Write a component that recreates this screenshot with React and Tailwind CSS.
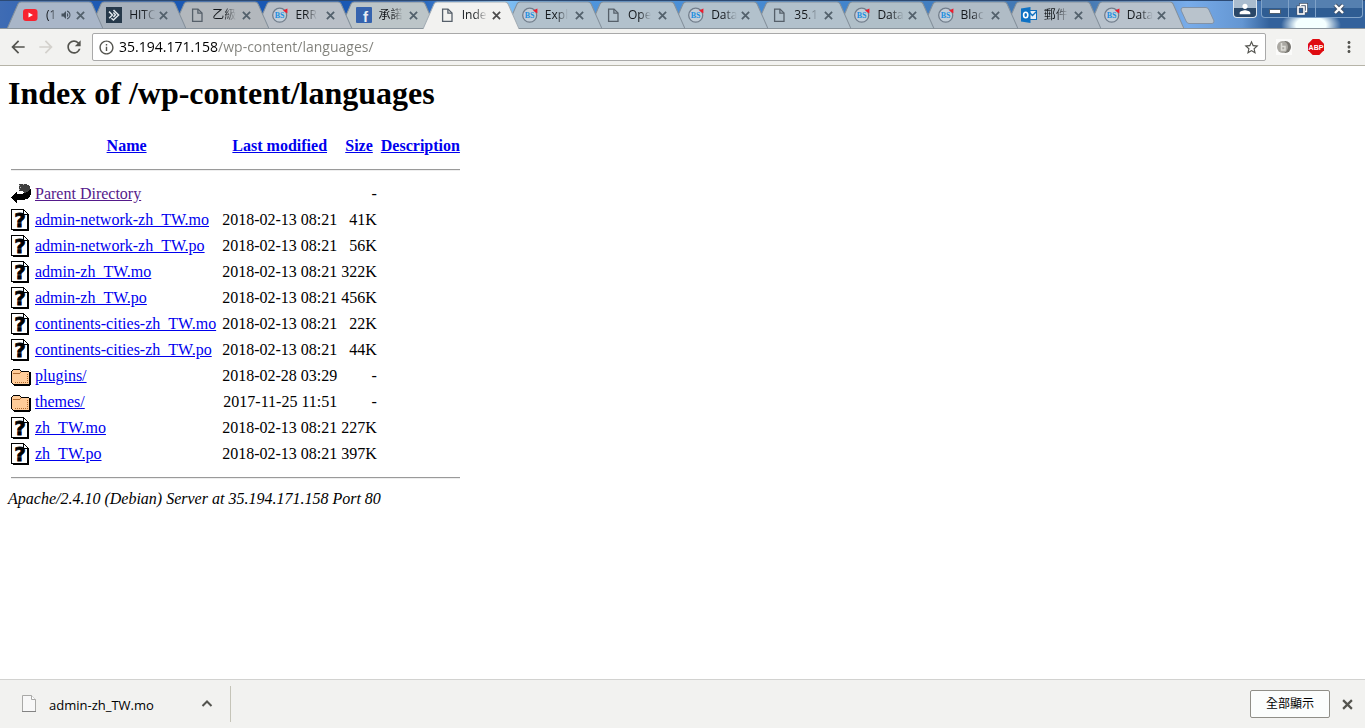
import {
    MdArrowBack,
    MdArrowForward,
    MdInfoOutline,
    MdMoreVert,
    MdPerson,
    MdRefresh,
    MdStarBorder,
    MdVolumeUp,
} from "react-icons/md";

const tabs = [
    { title: "(1", icon: "youtube", fill: "#a9b6c8", sound: true },
    { title: "HITC", icon: "hitcon", fill: "#a7b1bc" },
    { title: "乙級", icon: "page", fill: "#b3b8bd" },
    { title: "ERR", icon: "bs", fill: "#b9bfc7" },
    { title: "承諾", icon: "facebook", fill: "#bcc5c8" },
    { title: "Inde", icon: "page", fill: "#f2f2f0", active: true },
    { title: "Expl", icon: "bs", fill: "#b2c1cc" },
    { title: "Ope", icon: "page", fill: "#b2c1cc" },
    { title: "Data", icon: "bs", fill: "#b2c1cc" },
    { title: "35.1", icon: "page", fill: "#b2c1cc" },
    { title: "Data", icon: "bs", fill: "#b0bfc8" },
    { title: "Blac", icon: "bs", fill: "#b0bcc6" },
    { title: "郵件", icon: "outlook", fill: "#b0bac4" },
    { title: "Data", icon: "bs", fill: "#b8c2cc" },
];

const files = [
    { name: "Parent Directory", icon: "back", date: "", size: "-" },
    { name: "admin-network-zh_TW.mo", icon: "unknown", date: "2018-02-13 08:21", size: "41K" },
    { name: "admin-network-zh_TW.po", icon: "unknown", date: "2018-02-13 08:21", size: "56K" },
    { name: "admin-zh_TW.mo", icon: "unknown", date: "2018-02-13 08:21", size: "322K" },
    { name: "admin-zh_TW.po", icon: "unknown", date: "2018-02-13 08:21", size: "456K" },
    { name: "continents-cities-zh_TW.mo", icon: "unknown", date: "2018-02-13 08:21", size: "22K" },
    { name: "continents-cities-zh_TW.po", icon: "unknown", date: "2018-02-13 08:21", size: "44K" },
    { name: "plugins/", icon: "folder", date: "2018-02-28 03:29", size: "-" },
    { name: "themes/", icon: "folder", date: "2017-11-25 11:51", size: "-" },
    { name: "zh_TW.mo", icon: "unknown", date: "2018-02-13 08:21", size: "227K" },
    { name: "zh_TW.po", icon: "unknown", date: "2018-02-13 08:21", size: "397K" },
];

function CloseIcon({ className }) {
    return (
        <svg viewBox="0 0 10 10" className={className} stroke="currentColor" strokeWidth="2">
            <path d="M1 1L9 9M9 1L1 9" />
        </svg>
    );
}

function Favicon({ name }) {
    if (name === "youtube") {
        return (
            <svg viewBox="0 0 16 16" className="size-4 shrink-0">
                <rect x="0" y="2" width="14.5" height="12" rx="3" fill="#f8232f" />
                <path d="M5.5 5.5L10 8L5.5 10.5Z" fill="#fff" />
            </svg>
        );
    }
    if (name === "hitcon") {
        return (
            <svg viewBox="0 0 16 16" className="size-4 shrink-0">
                <rect width="16" height="16" fill="#26394a" />
                <g fill="none" stroke="#dfe6ea" strokeWidth="1.5">
                    <path d="M7.5 3L12.6 8L7.4 13L5.4 11.2" />
                    <path d="M3 4.6L6.4 8L3.2 11.2M7.4 5.6L9.4 7.8L7.4 10" />
                </g>
            </svg>
        );
    }
    if (name === "facebook") {
        return (
            <svg viewBox="0 0 16 16" className="size-4 shrink-0">
                <rect width="16" height="16" rx="1" fill="#3563ae" />
                <text x="7" y="14.5" fontSize="15" fontWeight="bold" fontFamily="Liberation Sans, sans-serif" fill="#e8edf5">
                    f
                </text>
            </svg>
        );
    }
    if (name === "outlook") {
        return (
            <svg viewBox="0 0 16 16" className="size-4 shrink-0">
                <rect x="7" y="3.5" width="8.5" height="9" fill="#e6eff7" stroke="#0f6fbd" />
                <path d="M8 5L11.5 8.5L15.5 4.5" fill="none" stroke="#0f6fbd" strokeWidth="1.4" />
                <path d="M0 1.5L9.5 0V16L0 14.5Z" fill="#0f72c4" />
                <ellipse cx="4.7" cy="8" rx="2.1" ry="2.8" fill="none" stroke="#fff" strokeWidth="1.6" />
            </svg>
        );
    }
    if (name === "bs") {
        return (
            <svg viewBox="0 0 16 16" className="size-4 shrink-0">
                <circle cx="7.7" cy="8.2" r="7" fill="#c3ced8" stroke="#717d8b" strokeWidth="1.3" />
                <text x="7.6" y="11" textAnchor="middle" fontSize="8" fontWeight="bold" fontFamily="Liberation Serif, serif" fill="#1e8fe0">
                    BS
                </text>
                <path d="M11 3.4L15.4 1.4V6.6L13.6 5.2Z" fill="#ed1c2e" />
            </svg>
        );
    }
    return (
        <svg viewBox="0 0 16 16" className="size-4 shrink-0" fill="none" stroke="#56606a" strokeWidth="1.3">
            <path d="M3.6 2.1H9L13 6.1V14.4H3.6Z" />
            <path d="M8.9 2V6.2H13" />
        </svg>
    );
}

function Tab({ tab, index }) {
    return (
        <div
            className="relative flex h-[29px] min-w-0 flex-1 items-center pt-px pr-[18px] pl-4 not-first:-ml-[13px]"
            style={{ zIndex: tab.active ? 30 : 20 - index }}
        >
            <svg viewBox="0 0 96 29" preserveAspectRatio="none" className="absolute inset-0 size-full">
                <path d="M0 29L11 4Q12 2 14 2H82Q84 2 85 4L96 29Z" fill={tab.fill} />
                {!tab.active && <path d="M0 28.5H96" stroke="#8a949c" />}
                <path
                    d="M0 29L11 4Q12 2 14 2H82Q84 2 85 4L96 29"
                    fill="none"
                    stroke={tab.active ? "#a3adb5" : "#84909b"}
                />
            </svg>
            <button type="button" className="relative flex min-w-0 flex-1 items-center">
                <Favicon name={tab.icon} />
                <span className="ml-[7px] text-xs whitespace-nowrap text-[#15191d] mask-r-from-50% mask-r-to-100%">
                    {tab.title}
                </span>
                {tab.sound && <MdVolumeUp className="ml-1 size-3 shrink-0 text-[#46525e]" />}
            </button>
            <button
                type="button"
                aria-label="關閉分頁"
                className={`relative shrink-0 ${tab.active ? "text-[#4c4c4c]" : "text-[#53616c]"}`}
            >
                <CloseIcon className="size-[9px]" />
            </button>
        </div>
    );
}

function WindowButtons() {
    return (
        <div className="mr-[2px] flex items-start gap-1 text-white">
            <button
                type="button"
                aria-label="使用者"
                className="flex h-[18px] w-6 items-center justify-center rounded-b border border-t-0 border-[#dbe4ec] bg-linear-to-b from-[#a9bccf] from-50% to-[#2a4768] to-50%"
            >
                <MdPerson className="size-4" />
            </button>
            <div className="flex h-[18px] rounded-b border border-t-0 border-[#7fa2c8] bg-linear-to-b from-[#5580b0] from-50% to-[#2f5d93] to-50%">
                <button type="button" aria-label="最小化" className="flex w-[27px] items-center justify-center border-r border-[#7fa2c8]">
                    <svg viewBox="0 0 12 12" className="size-3">
                        <rect x="0.5" y="6.5" width="11" height="4" fill="#fff" stroke="#51606f" />
                    </svg>
                </button>
                <button type="button" aria-label="還原" className="flex w-[27px] items-center justify-center border-r border-[#7fa2c8]">
                    <svg viewBox="0 0 12 12" className="size-3" fill="none">
                        <path d="M4.5 3V1.5H10.5V8.5H9" stroke="#43536a" strokeWidth="3" />
                        <rect x="2" y="4" width="6" height="7" stroke="#43536a" strokeWidth="3" />
                        <path d="M4.5 3V1.5H10.5V8.5H9" stroke="#fff" strokeWidth="1.4" />
                        <rect x="2" y="4" width="6" height="7" stroke="#fff" strokeWidth="1.6" />
                    </svg>
                </button>
                <button type="button" aria-label="關閉" className="flex w-[46px] items-center justify-center">
                    <svg viewBox="0 0 12 12" className="size-3">
                        <path d="M2 2L10 10M10 2L2 10" stroke="#43536a" strokeWidth="4.4" />
                        <path d="M2 2L10 10M10 2L2 10" stroke="#fff" strokeWidth="2.4" />
                    </svg>
                </button>
            </div>
        </div>
    );
}

function Toolbar() {
    return (
        <div className="flex h-[37px] items-center border-b border-[#b6b4a8] bg-[#f2f2f0] pr-[7px] pl-2 text-[#54544f]">
            <div className="flex items-center gap-2">
                <button type="button" aria-label="上一頁">
                    <MdArrowBack className="size-5" />
                </button>
                <button type="button" aria-label="下一頁" className="text-[#d3d1cc]">
                    <MdArrowForward className="size-5" />
                </button>
                <button type="button" aria-label="重新載入">
                    <MdRefresh className="size-5" />
                </button>
            </div>
            <div className="ml-2 flex h-7 flex-1 items-center rounded-xs border border-[#a9a9a9] bg-white px-[5px]">
                <MdInfoOutline className="size-[17px] shrink-0" />
                <input
                    type="text"
                    aria-label="網址"
                    defaultValue="35.194.171.158/wp-content/languages/"
                    className="ml-1 min-w-0 flex-1 bg-linear-to-r from-black from-[99px] to-[#80807a] to-[99px] bg-clip-text text-sm text-transparent caret-black outline-none"
                />
                <button type="button" aria-label="加入書籤">
                    <MdStarBorder className="size-[17px]" />
                </button>
            </div>
            <div className="ml-[10px] flex items-center gap-4">
                <button type="button" aria-label="擴充功能">
                    <svg viewBox="0 0 16 16" className="size-4">
                        <rect width="16" height="16" fill="#fbfbfa" />
                        <ellipse cx="9.5" cy="8" rx="5.5" ry="6" fill="#77756f" />
                        <ellipse cx="6.5" cy="8" rx="5.5" ry="6" fill="#aaa8a2" />
                        <path d="M5.5 4V11H9V7.5H6" fill="none" stroke="#deddd8" strokeWidth="1.5" />
                    </svg>
                </button>
                <button type="button" aria-label="Adblock Plus">
                    <svg viewBox="0 0 16 16" className="size-4">
                        <path d="M4.7 0H11.3L16 4.7V11.3L11.3 16H4.7L0 11.3V4.7Z" fill="#df0b10" />
                        <text x="8" y="10.6" textAnchor="middle" fontSize="7" fontWeight="bold" fontFamily="Liberation Sans, sans-serif" fill="#fff">
                            ABP
                        </text>
                    </svg>
                </button>
                <button type="button" aria-label="選單">
                    <MdMoreVert className="size-[18px]" />
                </button>
            </div>
        </div>
    );
}

function FileIcon({ name }) {
    if (name === "back") {
        return (
            <svg viewBox="0 0 20 22" className="h-[22px] w-5" shapeRendering="crispEdges">
                <path d="M8 1H14L17 2L19 4L20 7V11H14L12 8H8Z" fill="#3f3f3f" />
                <path d="M8 2.5H10M9 4.5H11M8 6.5H10M12 1.5H13" stroke="#b5b5b5" strokeDasharray="1 1" />
                <path d="M0 14L5 9H6V11H11L16 9L20 6V11L18 15L13 17H6V20H5Z" fill="#000" />
            </svg>
        );
    }
    if (name === "folder") {
        return (
            <svg viewBox="0 0 20 22" className="h-[22px] w-5" shapeRendering="crispEdges">
                <path d="M2 20H18V19H19V7H20V20H19V21H3Z" fill="#000" />
                <path d="M0.5 6.5L2.5 4.5H8.5L10.5 6.5H17.5L18.5 7.5V18.5L17.5 19.5H2.5L0.5 17.5Z" fill="#ffcc99" stroke="#000" />
                <path d="M2 8.5H8L10 7.5" fill="none" stroke="#b06a30" />
                <path d="M4 17.5H17M16.5 9V18" fill="none" stroke="#b06a30" strokeDasharray="1 1" />
            </svg>
        );
    }
    return (
        <svg viewBox="0 0 20 22" className="h-[22px] w-5" shapeRendering="crispEdges">
            <path d="M0.5 0.5H12.5L17.5 5.5V20.5H0.5Z" fill="#fff" stroke="#000" />
            <path d="M12.5 1V5.5H17" fill="none" stroke="#000" />
            <path d="M17 6V21H2" fill="none" stroke="#000" strokeWidth="2" />
            <text
                x="9"
                y="18"
                textAnchor="middle"
                fontSize="20"
                fontWeight="bold"
                fontFamily="DejaVu Sans, sans-serif"
                stroke="#000"
                strokeWidth="0.8"
            >
                ?
            </text>
        </svg>
    );
}

function Rule() {
    return (
        <tr>
            <th colSpan={5} className="p-px">
                <hr className="my-2 h-[2px] border-t border-b border-t-[#9a9a9a] border-b-[#eeeeee]" />
            </th>
        </tr>
    );
}

function Listing() {
    return (
        <main className="flex-1 bg-white p-2 font-['Liberation_Serif',serif] text-base leading-[18px] text-black">
            <h1 className="mb-5 text-[32px] leading-[38px] font-bold">Index of /wp-content/languages</h1>
            <table className="border-separate border-spacing-[2px] whitespace-nowrap">
                <thead>
                    <tr className="h-6 text-[#0000ee]">
                        <th className="p-px"></th>
                        <th className="p-px"><a href="#name" className="underline">Name</a></th>
                        <th className="p-px"><a href="#modified" className="underline">Last modified</a></th>
                        <th className="p-px"><a href="#size" className="underline">Size</a></th>
                        <th className="p-px"><a href="#description" className="underline">Description</a></th>
                    </tr>
                    <Rule />
                </thead>
                <tbody>
                    {files.map((file) => (
                        <tr key={file.name}>
                            <td className="p-px">
                                <FileIcon name={file.icon} />
                            </td>
                            <td className="py-px pr-[3px] pl-px">
                                <a
                                    href="#file"
                                    className={`underline ${file.icon === "back" ? "text-[#551a8b]" : "text-[#0000ee]"}`}
                                >
                                    {file.name}
                                </a>
                            </td>
                            <td className="p-px text-right">{file.date}</td>
                            <td className="p-px text-right">{file.size}</td>
                            <td className="p-px"></td>
                        </tr>
                    ))}
                    <Rule />
                </tbody>
            </table>
            <address>Apache/2.4.10 (Debian) Server at 35.194.171.158 Port 80</address>
        </main>
    );
}

function DownloadBar() {
    return (
        <footer className="flex h-[49px] items-center border-t border-[#d2d2d0] bg-[#f2f2f0] pr-3 text-[#54544f]">
            <div className="flex h-9 w-[231px] items-center border-r border-[#c5c4b8] pr-[17px] pl-[22px]">
                <svg viewBox="0 0 14 18" className="h-[18px] w-[14px]">
                    <path d="M0.5 0.5H9.5L13.5 4.5V16.5H0.5Z" fill="#f8f8f8" stroke="#a9a9a7" />
                    <path d="M9.5 0.5V4.5H13.5" fill="#fff" stroke="#a9a9a7" />
                    <path d="M0 16.5H14" stroke="#838383" />
                </svg>
                <button type="button" className="ml-[13px] flex-1 pt-1 text-left text-[13px] text-black">
                    admin-zh_TW.mo
                </button>
                <button type="button" aria-label="更多">
                    <svg viewBox="0 0 12 12" className="size-3" fill="none" stroke="currentColor" strokeWidth="2">
                        <path d="M1.5 8L6 3.5L10.5 8" />
                    </svg>
                </button>
            </div>
            <button type="button" className="ml-auto h-7 w-20 rounded-xs border border-[#8f8e87] bg-[#fbfdfc] text-xs text-black">
                全部顯示
            </button>
            <button type="button" aria-label="關閉" className="ml-3">
                <CloseIcon className="size-[11px]" />
            </button>
        </footer>
    );
}

export default function App() {
    return (
        <div className="flex min-h-screen flex-col font-['Open_Sans','Noto_Sans_CJK_TC',sans-serif]">
            <header>
                <div className="flex h-[29px] items-start bg-[radial-gradient(ellipse_30px_16px_at_calc(100%-54px)_25px,#f4ffff_50%,transparent),linear-gradient(to_right,#3f6cb4,#1a58b4_8%,#1a58b4_30%,#80c0f4_37%,#4f95dc_43%,#4284cc_62%,#4274ac_79%,#78acea_87%,#6496d2_91%,#33629c_93%,#33629c)] pl-[7px] shadow-[inset_0_1px_#2c4a74,inset_0_-1px_#8a949c]">
                    <div className="flex max-w-[1177px] flex-1">
                        {tabs.map((tab, index) => (
                            <Tab key={index} tab={tab} index={index} />
                        ))}
                    </div>
                    <button type="button" aria-label="新增分頁" className="mt-[7px] -ml-1">
                        <svg viewBox="0 0 35 17" className="h-[17px] w-[35px]">
                            <path d="M3 0.5H26Q28 0.5 29 3L34 14Q34 16.5 32 16.5H9Q7 16.5 6 14L1 3Q1 0.5 3 0.5Z" fill="#b9c3cc" stroke="#8292a6" />
                        </svg>
                    </button>
                    <div className="ml-auto">
                        <WindowButtons />
                    </div>
                </div>
                <Toolbar />
            </header>
            <Listing />
            <DownloadBar />
        </div>
    );
}
